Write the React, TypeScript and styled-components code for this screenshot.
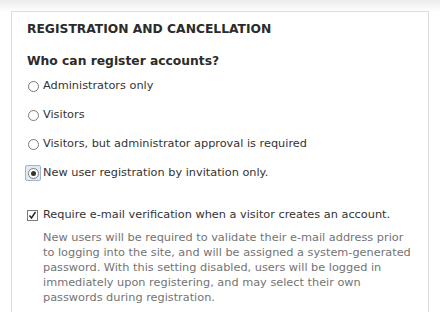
import React from "react";
import styled, { createGlobalStyle } from "styled-components";

const Global = createGlobalStyle`
  html, body { margin: 0; padding: 0; background: #fff; }
  body { font-family: "DejaVu Sans", Verdana, sans-serif; color: #333; }
`;

const Page = styled.div`
  width: 440px;
  height: 312px;
  overflow: hidden;
  box-sizing: border-box;
  padding: 11px 11px 0 11px;
  background: linear-gradient(#ececec 0px, #ffffff 12px);
`;

const Fieldset = styled.section`
  background: #fff;
  border: 1px solid #dcdcdc;
  border-bottom: none;
  height: 320px;
  box-sizing: border-box;
  padding: 9px 10px 0 15px;
`;

const Legend = styled.h2`
  margin: 0;
  font-size: 12.3px;
  font-weight: bold;
  text-transform: uppercase;
  color: #2b2b2b;
  line-height: 16px;
`;

const Question = styled.h3`
  margin: 15px 0 0;
  font-size: 12.3px;
  font-weight: bold;
  color: #2b2b2b;
  line-height: 18px;
`;

const Options = styled.div`
  display: flex;
  flex-direction: column;
  gap: 11px;
  margin-top: 7px;
`;

const OptionRow = styled.label`
  display: flex;
  align-items: center;
  gap: 4px;
  font-size: 11.3px;
  line-height: 18px;
  color: #333;
`;

const RadioWrap = styled.span<{ $focus?: boolean }>`
  width: 16px;
  height: 16px;
  display: flex;
  align-items: center;
  justify-content: center;
  margin-left: -2px;
  margin-right: -2px;
  border-radius: 2px;
  box-sizing: border-box;
  border: 1px solid ${(p) => (p.$focus ? "#9db4d2" : "transparent")};
  background: ${(p) => (p.$focus ? "#e2e9f2" : "transparent")};
`;

const RadioDot = styled.span<{ $checked?: boolean }>`
  width: 11px;
  height: 11px;
  border-radius: 50%;
  border: 1px solid #7a7a7a;
  background: #fff;
  box-sizing: border-box;
  display: flex;
  align-items: center;
  justify-content: center;
  &::after {
    content: "";
    width: 5px;
    height: 5px;
    border-radius: 50%;
    background: ${(p) => (p.$checked ? "#333" : "transparent")};
  }
`;

const CheckRow = styled(OptionRow)`
  margin-top: 24px;
  gap: 5px;
`;

const Box = styled.span`
  width: 11px;
  height: 11px;
  border: 1px solid #7a7a7a;
  box-sizing: border-box;
  display: flex;
  align-items: center;
  justify-content: center;
  background: #fff;
`;

const Description = styled.p`
  margin: 6px 0 0 16px;
  font-size: 11.3px;
  line-height: 15px;
  color: #737373;
`;

const options = [
  "Administrators only",
  "Visitors",
  "Visitors, but administrator approval is required",
  "New user registration by invitation only.",
];

export default function App() {
  return (
    <>
      <Global />
      <Page>
        <Fieldset>
          <Legend>Registration and cancellation</Legend>
          <Question>Who can register accounts?</Question>
          <Options>
            {options.map((o, i) => (
              <OptionRow key={o}>
                <RadioWrap $focus={i === 3}>
                  <RadioDot $checked={i === 3} />
                </RadioWrap>
                {o}
              </OptionRow>
            ))}
          </Options>
          <CheckRow>
            <Box>
              <svg width="9" height="9" viewBox="0 0 9 9">
                <path d="M1.5 4.5 L3.5 7 L7.5 1" fill="none" stroke="#222" strokeWidth="1.4" />
              </svg>
            </Box>
            Require e-mail verification when a visitor creates an account.
          </CheckRow>
          <Description>
            New users will be required to validate their e-mail address prior
            to logging into the site, and will be assigned a system-generated
            password. With this setting disabled, users will be logged in
            immediately upon registering, and may select their own passwords
            during registration.
          </Description>
        </Fieldset>
      </Page>
    </>
  );
}
